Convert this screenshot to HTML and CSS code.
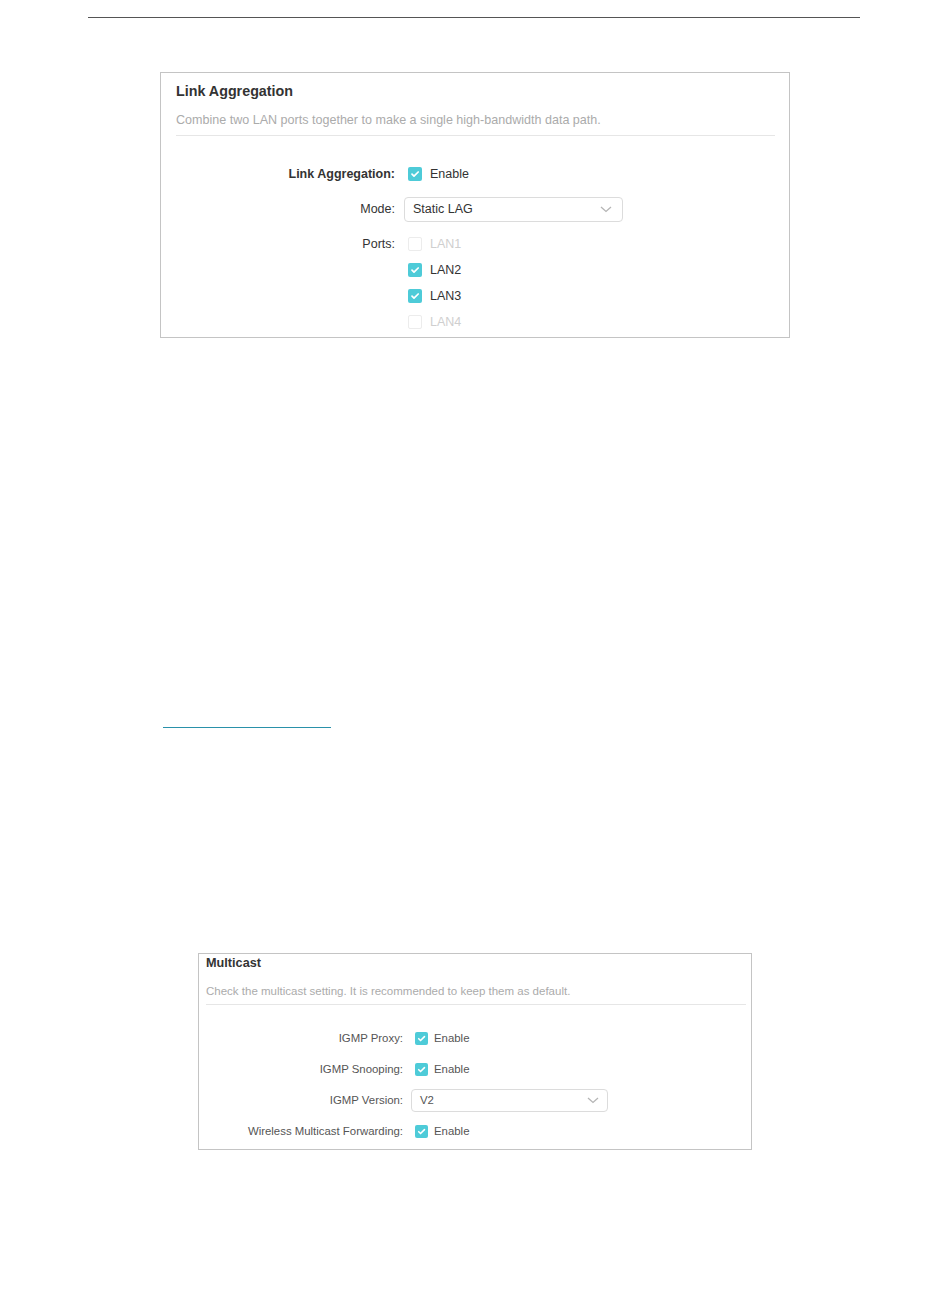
FILE: index.html
```html
<!DOCTYPE html>
<html lang="en">
<head>
    <meta charset="UTF-8">
    <title>Link Aggregation and Multicast</title>
    <link rel="stylesheet" href="styles.css">
</head>
<body>
    <div class="page">
        <div class="top-rule"></div>

        <!-- Link Aggregation panel -->
        <div class="card card-lag">
            <div class="card-title">Link Aggregation</div>
            <div class="card-desc">Combine two LAN ports together to make a single high-bandwidth data path.</div>
            <div class="card-divider"></div>

            <div class="form">
                <div class="row">
                    <span class="label label-strong">Link Aggregation:</span>
                    <label class="check checked"><span class="box"><svg viewBox="0 0 14 14"><path d="M4 7.2l2 2L10.2 5"/></svg></span>Enable</label>
                </div>
                <div class="row">
                    <span class="label">Mode:</span>
                    <div class="select">
                        <span>Static LAG</span>
                        <svg class="chevron" width="12" height="7" viewBox="0 0 12 7"><path d="M1 1l5 4.5L11 1"/></svg>
                    </div>
                </div>
                <div class="row row-top">
                    <span class="label">Ports:</span>
                    <div class="check-list">
                        <label class="check disabled"><span class="box"></span>LAN1</label>
                        <label class="check checked"><span class="box"><svg viewBox="0 0 14 14"><path d="M4 7.2l2 2L10.2 5"/></svg></span>LAN2</label>
                        <label class="check checked"><span class="box"><svg viewBox="0 0 14 14"><path d="M4 7.2l2 2L10.2 5"/></svg></span>LAN3</label>
                        <label class="check disabled"><span class="box"></span>LAN4</label>
                    </div>
                </div>
            </div>
        </div>

        <div class="note-rule"></div>

        <!-- Multicast panel -->
        <div class="card card-mc">
            <div class="card-title">Multicast</div>
            <div class="card-desc">Check the multicast setting. It is recommended to keep them as default.</div>
            <div class="card-divider"></div>

            <div class="form">
                <div class="row">
                    <span class="label">IGMP Proxy:</span>
                    <label class="check checked"><span class="box"><svg viewBox="0 0 14 14"><path d="M4 7.2l2 2L10.2 5"/></svg></span>Enable</label>
                </div>
                <div class="row">
                    <span class="label">IGMP Snooping:</span>
                    <label class="check checked"><span class="box"><svg viewBox="0 0 14 14"><path d="M4 7.2l2 2L10.2 5"/></svg></span>Enable</label>
                </div>
                <div class="row">
                    <span class="label">IGMP Version:</span>
                    <div class="select">
                        <span>V2</span>
                        <svg class="chevron" width="12" height="7" viewBox="0 0 12 7"><path d="M1 1l5 4.5L11 1"/></svg>
                    </div>
                </div>
                <div class="row">
                    <span class="label">Wireless Multicast Forwarding:</span>
                    <label class="check checked"><span class="box"><svg viewBox="0 0 14 14"><path d="M4 7.2l2 2L10.2 5"/></svg></span>Enable</label>
                </div>
            </div>
        </div>
    </div>
</body>
</html>
```

FILE: styles.css
```css
body {
    margin: 0;
    background-color: #fff;
    font-family: 'Liberation Sans', Arial, sans-serif;
    color: #333;
}

.page {
    width: 950px;
    padding-top: 17px;
    padding-bottom: 40px;
}

.top-rule {
    margin-left: 88px;
    width: 772px;
    border-top: 1px solid #555;
}

.note-rule {
    margin-top: 389px;
    margin-left: 163px;
    width: 168px;
    border-top: 1px solid #2a91aa;
}

/* panels */
.card {
    box-sizing: border-box;
    border: 1px solid #c4c4c4;
    background-color: #fff;
}

.card-lag {
    margin-top: 54px;
    margin-left: 160px;
    width: 630px;
    padding: 8px 14px 2px 15px;
}

.card-mc {
    margin-top: 225px;
    margin-left: 198px;
    width: 554px;
    padding: 1px 5px 6px 7px;
}

.card-title {
    font-weight: bold;
    color: #333;
}

.card-desc {
    color: #ababab;
}

.card-divider {
    border-top: 1px solid #e6e6e6;
}

.card-lag .card-title { font-size: 14.3px; line-height: 20px; }
.card-lag .card-desc { font-size: 12.55px; line-height: 18px; margin-top: 10px; }
.card-lag .card-divider { margin-top: 6px; }

.card-mc .card-title { font-size: 12.7px; line-height: 17px; }
.card-mc .card-desc { font-size: 11.5px; line-height: 16px; margin-top: 11px; }
.card-mc .card-divider { margin-top: 5px; }

/* form rows */
.form {
    display: flex;
    flex-direction: column;
}

.row {
    display: flex;
    align-items: center;
}

.row-top {
    align-items: flex-start;
}

.label {
    text-align: right;
    flex-shrink: 0;
}

.label-strong {
    font-weight: bold;
}

.card-lag .form { margin-top: 25px; gap: 9px; font-size: 12.5px; }
.card-lag .row { min-height: 26px; }
.card-lag .label { width: 219px; margin-right: 9px; line-height: 26px; }

.card-mc .form { margin-top: 21px; gap: 7px; font-size: 11.4px; color: #555; }
.card-mc .row { min-height: 24px; }
.card-mc .label { width: 197px; margin-right: 8px; line-height: 24px; }

/* checkboxes */
.check-list {
    display: flex;
    flex-direction: column;
}

.check {
    display: flex;
    align-items: center;
    margin-left: 4px;
}

.card-lag .check { height: 26px; }
.card-mc .check { height: 24px; }

.box {
    box-sizing: border-box;
    display: flex;
    width: 14px;
    height: 14px;
    margin-right: 8px;
    border-radius: 2px;
    border: 1px solid #e3e3e3;
    background-color: #fff;
    flex-shrink: 0;
}

.card-mc .box {
    width: 13px;
    height: 13px;
    margin-right: 6px;
}

.box svg {
    width: 100%;
    height: 100%;
}

.box path {
    fill: none;
    stroke: #fff;
    stroke-width: 1.7;
    stroke-linecap: round;
    stroke-linejoin: round;
}

.check.checked .box {
    border: none;
    background-color: #4ecbd8;
}

.check.disabled {
    color: #cfcfcf;
}

.check.disabled .box {
    border-color: #ececec;
}

/* select */
.select {
    box-sizing: border-box;
    display: flex;
    align-items: center;
    justify-content: space-between;
    border: 1px solid #dcdcdc;
    border-radius: 4px;
    background-color: #fff;
}

.chevron path {
    fill: none;
    stroke: #b5b5b5;
    stroke-width: 1.3;
}

.card-lag .select {
    width: 219px;
    height: 25px;
    padding: 0 10px 0 8px;
}

.card-mc .select {
    width: 197px;
    height: 23px;
    padding: 0 8px 0 8px;
}
```
